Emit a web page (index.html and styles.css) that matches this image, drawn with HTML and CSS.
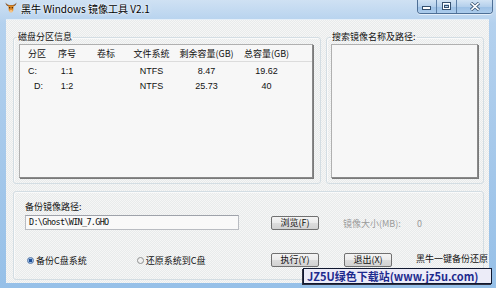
FILE: index.html
```html
<!DOCTYPE html>
<html lang="zh-CN">
<head>
  <meta charset="UTF-8">
  <title>黑牛 Windows 镜像工具 V2.1</title>
  <link rel="stylesheet" href="styles.css">
</head>
<body>
<div class="window">
  <div class="titlebar">
    <svg class="app-icon" width="12" height="12" viewBox="0 0 12 12">
      <path d="M0.5 0.5 Q0.8 4 4 4.2 L8 4.2 Q11.2 4 11.5 0.5 Q10.2 2.8 8 2.9 L4 2.9 Q1.8 2.8 0.5 0.5 Z" fill="#8a5424"/>
      <path d="M3.2 3.6 L8.8 3.6 L8.2 8.6 Q6 11.8 3.8 8.6 Z" fill="#e58b22"/>
      <ellipse cx="6" cy="9.2" rx="1.8" ry="1.2" fill="#f2c48a"/>
      <circle cx="4.7" cy="5.8" r="0.7" fill="#2a1a0a"/>
      <circle cx="7.3" cy="5.8" r="0.7" fill="#2a1a0a"/>
    </svg>
    <span class="title">黑牛 Windows 镜像工具 V2.1</span>
    <div class="caption">
      <span class="cap-btn cap-min">
        <svg width="10" height="6" viewBox="0 0 10 6"><rect x="0.5" y="1.5" width="8" height="3" fill="#fff" stroke="#35506f"/></svg>
      </span>
      <span class="cap-btn cap-max">
        <svg width="10" height="9" viewBox="0 0 10 9"><rect x="0.5" y="0.5" width="8" height="7" fill="none" stroke="#35506f"/><rect x="1.5" y="1.5" width="6" height="5" fill="none" stroke="#fff"/><rect x="2.5" y="3.5" width="4" height="2" fill="none" stroke="#35506f"/></svg>
      </span>
      <span class="cap-btn cap-close">
        <svg width="10" height="9" viewBox="0 0 10 9"><path d="M1 1 L9 8 M9 1 L1 8" stroke="#35506f" stroke-width="3.2"/><path d="M1.3 1.2 L8.7 7.8 M8.7 1.2 L1.3 7.8" stroke="#fff" stroke-width="1.6"/></svg>
      </span>
    </div>
  </div>

  <div class="client">
    <div class="top">
      <fieldset class="group disk">
        <legend>磁盘分区信息</legend>
        <div class="listbox listview">
          <div class="lv-row lv-head">
            <span class="first">分区</span>
            <span>序号</span>
            <span>卷标</span>
            <span>文件系统</span>
            <span>剩余容量(GB)</span>
            <span>总容量(GB)</span>
          </div>
          <div class="lv-row">
            <span class="first">C:</span>
            <span>1:1</span>
            <span></span>
            <span>NTFS</span>
            <span>8.47</span>
            <span>19.62</span>
          </div>
          <div class="lv-row">
            <span class="first indent">D:</span>
            <span>1:2</span>
            <span></span>
            <span>NTFS</span>
            <span>25.73</span>
            <span>40</span>
          </div>
        </div>
      </fieldset>

      <fieldset class="group search">
        <legend>搜索镜像名称及路径:</legend>
        <div class="listbox"></div>
      </fieldset>
    </div>

    <div class="group bottom">
      <div class="path-label">备份镜像路径:</div>

      <div class="path-input">D:\Ghost\WIN_7.GHO</div>
      <div class="btn btn-browse">浏览(F)</div>
      <div class="muted size-label">镜像大小(MB):</div>
      <div class="muted size-value">0</div>

      <div class="radios">
        <label class="radio checked"><span class="dot"></span>备份C盘系统</label>
        <label class="radio"><span class="dot"></span>还原系统到C盘</label>
      </div>
      <div class="btn btn-run">执行(Y)</div>
      <div class="btn btn-exit">退出(X)</div>
      <div class="brand">黑牛一键备份还原</div>
    </div>
  </div>

  <div class="watermark">JZ5U绿色下载站(www.jz5u.com)</div>
</div>
</body>
</html>
```

FILE: styles.css
```css
* {
  box-sizing: border-box;
}

body {
  margin: 0;
  width: 496px;
  height: 288px;
  overflow: hidden;
  font-family: "Noto Sans CJK SC", "Liberation Sans", sans-serif;
  font-size: 9px;
  color: #111;
}

.window {
  position: relative;
  width: 496px;
  height: 288px;
  padding: 0 7px 5px 6px;
  display: flex;
  flex-direction: column;
  background: linear-gradient(180deg, #cfe1f3 0, #b4d1ee 8%, #a3c7ea 60%, #96c0e8 100%);
}

/* title bar */
.titlebar {
  height: 19px;
  display: flex;
  align-items: flex-start;
  flex-shrink: 0;
}

.app-icon {
  margin: 2px 0 0 -1px;
}

.title {
  margin-left: 4px;
  font-size: 10px;
  line-height: 17px;
  color: #000;
  text-shadow: 0 0 4px #fff, 0 0 2px #fff;
}

.caption {
  margin-left: auto;
  margin-right: -4px;
  display: flex;
  height: 14px;
  border: 1px solid #4d6f96;
  border-top: none;
  border-radius: 0 0 4px 4px;
  overflow: hidden;
  box-shadow: 0 1px 0 rgba(255,255,255,0.6);
}

.cap-btn {
  display: flex;
  align-items: center;
  justify-content: center;
  background: linear-gradient(180deg, #d2e3f4 0, #b5d0ec 50%, #9cc0e5 51%, #acccec 100%);
  border-right: 1px solid #5b7ea6;
}

.cap-min {
  width: 19px;
  align-items: flex-end;
  padding-bottom: 2px;
}

.cap-max { width: 20px; }

.cap-close {
  width: 35px;
  border-right: none;
}

/* client area */
.client {
  flex: 1;
  display: flex;
  flex-direction: column;
  padding: 11px 5px 3px 7px;
  background-color: #eff0f0;
  background-image: repeating-conic-gradient(#e8ebeb 0 25%, #f6f6f6 0 50%);
  background-size: 2px 2px;
  border-top: 1px solid #e4eef8;
}

.top {
  display: flex;
  gap: 5px;
  height: 153px;
}

.group {
  margin: 0;
  min-width: 0;
  border: 1px solid #d3dde3;
  border-radius: 3px;
  box-shadow: inset 1px 1px 0 #fafafa;
}

.group legend {
  padding: 0 1px;
  margin-left: -2px;
  line-height: 12px;
  font-size: 9px;
}

.disk {
  width: 308px;
  padding: 0 7px 0 5px;
}

.search {
  width: 158px;
  padding: 0 5px 0 4px;
}

.search legend {
  margin-left: 0;
}

.listbox {
  margin-top: 1px;
  height: 134px;
  background: #f7f7f7;
  border: 1px solid #b0b0b0;
  border-right-color: #8a8a8a;
  border-bottom-color: #8a8a8a;
  box-shadow: 1px 1px 0 #7a7a7a;
}

/* list view */
.lv-row {
  display: grid;
  grid-template-columns: 32px 30px 48px 43px 67px 53px;
  height: 15px;
  align-items: center;
  font-family: "Liberation Sans", "Noto Sans CJK SC", sans-serif;
  font-size: 9px;
}

.lv-row span {
  text-align: center;
  white-space: nowrap;
}

.lv-row .first {
  text-align: left;
  padding-left: 8px;
}

.lv-row .indent {
  padding-left: 14px;
}

.lv-head {
  height: 17px;
  font-family: "Noto Sans CJK SC", sans-serif;
  border-bottom: 1px solid #dcdcdc;
  margin-bottom: 1px;
}

/* bottom panel */
.bottom {
  flex: 1;
  margin-top: 7px;
  padding: 9px 0 0 11px;
  display: grid;
  grid-template-columns: 246px 72px 73px auto;
  grid-template-rows: 12px 17px auto;
  align-content: start;
  align-items: start;
}

.path-label {
  grid-column: 1 / -1;
  line-height: 12px;
}

.path-input {
  margin-top: 2px;
  width: 214px;
  height: 15px;
  padding-left: 3px;
  border: 1px solid #b9bcc2;
  border-top-color: #9ea2aa;
  background: #f9f9f9;
  font-family: "DejaVu Sans Mono", monospace;
  font-size: 8.5px;
  letter-spacing: -0.7px;
  line-height: 13px;
}

.btn {
  width: 48px;
  height: 14px;
  border: 1px solid #707070;
  border-radius: 2px;
  background: linear-gradient(180deg, #f4f4f4 0, #ebebeb 50%, #dddddd 51%, #d2d2d2 100%);
  text-align: center;
  line-height: 12px;
  font-size: 9px;
}

.btn-browse {
  align-self: end;
}

.muted {
  color: #9a9a9a;
  align-self: end;
  line-height: 13px;
}

.size-value {
  padding-left: 1px;
}

.radios {
  margin-top: 23px;
  height: 14px;
  display: flex;
  gap: 50px;
  padding-left: 2px;
  align-items: center;
}

.radio {
  display: flex;
  align-items: center;
  gap: 2px;
}

.dot {
  width: 7px;
  height: 7px;
  border-radius: 50%;
  border: 1px solid #8e8f8f;
  background: #f2f2f2;
}

.radio.checked .dot {
  background: radial-gradient(circle, #1f4f96 0 1.6px, #9fc0e6 2px);
  border-color: #5476a8;
}

.btn-run,
.btn-exit {
  margin-top: 23px;
}

.btn-exit {
  margin-left: 1px;
}

.brand {
  margin-top: 23px;
  line-height: 12px;
  white-space: nowrap;
}

/* download-site stamp over the corner */
.watermark {
  position: absolute;
  left: 303px;
  top: 268px;
  width: 189px;
  height: 16px;
  border: 1px solid #101830;
  background: #ececf8;
  color: #1d2a8e;
  font-weight: bold;
  font-size: 11px;
  line-height: 14px;
  padding-left: 3px;
  white-space: nowrap;
  overflow: hidden;
  box-shadow: -1px 1px 0 #303040;
}
```
